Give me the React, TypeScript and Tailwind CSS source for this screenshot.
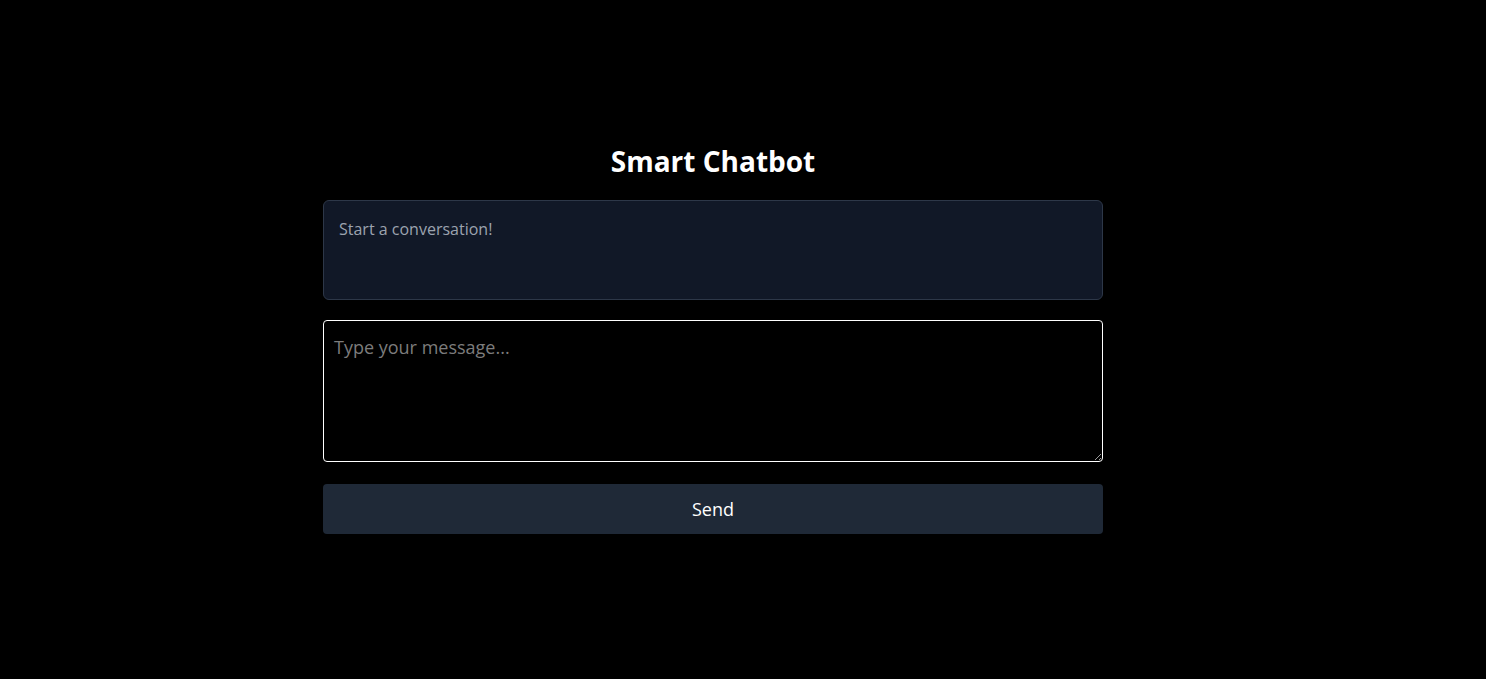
export default function App() {
  return (
    <div
      className="min-h-screen bg-black flex items-center justify-center pr-[60px] pb-[2px] text-white"
      style={{ fontFamily: '"Open Sans", "Noto Sans", sans-serif' }}
    >
      <div className="w-[780px] flex flex-col">
        <h1 className="text-[28px] leading-9 font-bold text-center mb-[21px]">Smart Chatbot</h1>
        <div className="h-[100px] bg-[#111827] border border-[#2d3748] rounded-md px-[15px] pt-[16px]">
          <p className="text-[16px] leading-6 text-[#9ca3af]">Start a conversation!</p>
        </div>
        <textarea
          className="mt-5 h-[142px] w-full bg-black border border-white rounded-[4px] px-[10px] py-[13px] text-[18px] leading-[27px] text-white placeholder:text-[#7c7c7c] outline-none"
          placeholder="Type your message..."
        />
        <button className="mt-[22px] h-[50px] w-full bg-[#1f2937] rounded-[4px] text-[18px] text-white">
          Send
        </button>
      </div>
    </div>
  );
}
